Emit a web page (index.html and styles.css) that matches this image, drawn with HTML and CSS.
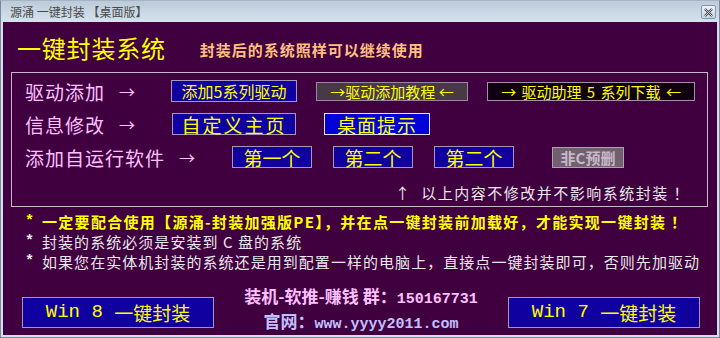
FILE: index.html
```html
<!DOCTYPE html>
<html lang="zh-CN">

<head>
    <meta charset="UTF-8">
    <meta name="viewport" content="width=device-width, initial-scale=1.0">
    <title>源涌 一键封装 【桌面版】</title>
    <link rel="stylesheet" href="styles.css">
</head>

<body>
    <div class="window">
        <div class="titlebar">
            <span class="title">源涌 一键封装 【桌面版】</span>
            <button class="close" title="关闭">
                <svg width="9" height="9" viewBox="0 0 9 9">
                    <path d="M1 1 L8 8 M8 1 L1 8" stroke="#303848" stroke-width="2.2" fill="none" />
                    <path d="M1 1 L8 8 M8 1 L1 8" stroke="#ffffff" stroke-width="0.8" fill="none" />
                </svg>
            </button>
        </div>

        <main class="client">
            <header class="head">
                <h1 class="head-title">一键封装系统</h1>
                <span class="head-sub">封装后的系统照样可以继续使用</span>
            </header>

            <section class="panel">
                <div class="row">
                    <span class="label">驱动添加</span>
                    <span class="arrow">→</span>
                    <button class="btn btn-blue btn-r1">添加5系列驱动</button>
                    <button class="btn btn-gray btn-guide">→驱动添加教程 ←</button>
                    <button class="btn btn-dark btn-down">→ 驱动助理 5 系列下载 ←</button>
                </div>
                <div class="row">
                    <span class="label">信息修改</span>
                    <span class="arrow">→</span>
                    <button class="btn btn-blue btn-big btn-home">自定义主页</button>
                    <button class="btn btn-bright btn-big btn-tip">桌面提示</button>
                </div>
                <div class="row">
                    <span class="label">添加自运行软件</span>
                    <span class="arrow">→</span>
                    <button class="btn btn-blue btn-big btn-soft btn-first">第一个</button>
                    <button class="btn btn-blue btn-big btn-soft">第二个</button>
                    <button class="btn btn-blue btn-big btn-soft">第二个</button>
                    <button class="btn btn-mute">非C预删</button>
                </div>
                <div class="row row-note">
                    <span>↑&nbsp; 以上内容不修改并不影响系统封装 ！</span>
                </div>
            </section>

            <ul class="notes">
                <li class="note-warn"><span class="star">*</span>一定要配合使用【源涌-封装加强版PE】，并在点一键封装前加载好，才能实现一键封装 ！</li>
                <li><span class="star">*</span>封装的系统必须是安装到 C 盘的系统</li>
                <li><span class="star">*</span>如果您在实体机封装的系统还是用到配置一样的电脑上，直接点一键封装即可，否则先加驱动</li>
            </ul>

            <footer class="foot">
                <button class="btn btn-blue btn-win"><span class="mono">Win 8 </span>一键封装</button>
                <div class="contact">
                    <div class="qq">装机-软推-赚钱 群：<span class="mono">150167731</span></div>
                    <div class="site">官网：<span class="mono">www.yyyy2011.com</span></div>
                </div>
                <button class="btn btn-blue btn-win"><span class="mono">Win 7 </span>一键封装</button>
            </footer>
        </main>
    </div>
</body>

</html>
```

FILE: styles.css
```css
body {
    margin: 0;
    font-family: "Noto Sans CJK SC", "Noto Sans", sans-serif;
}

.window {
    width: 720px;
    height: 338px;
    box-sizing: border-box;
    background-color: #d4e0ec;
    border: 1px solid #7c8898;
    border-top-color: #a8b4c4;
    display: flex;
    flex-direction: column;
}

.titlebar {
    height: 22px;
    display: flex;
    align-items: center;
    justify-content: space-between;
    padding: 0 3px 0 9px;
    background: linear-gradient(#bccbd9, #d6e2ee);
}

.title {
    font-size: 12px;
    color: #4a4a4a;
}

.close {
    width: 15px;
    height: 14px;
    padding: 0;
    margin-top: 1px;
    border: 1px solid #8494ac;
    border-radius: 2px;
    background: linear-gradient(#eef2f8, #c8d2e0);
    display: flex;
    align-items: center;
    justify-content: center;
}

.client {
    flex: 1;
    margin: 0 2px 2px 2px;
    background-color: #400040;
    display: flex;
    flex-direction: column;
    padding-left: 8px;
}

.head {
    height: 50px;
    display: flex;
    align-items: center;
    padding-left: 6px;
}

.head-title {
    margin: 0;
    font-size: 24px;
    font-weight: normal;
    color: #ffff00;
    letter-spacing: 0.8px;
}

.head-sub {
    margin-left: 34px;
    margin-top: 4px;
    font-size: 15px;
    font-weight: bold;
    color: #ffc080;
    letter-spacing: 1px;
}

.panel {
    width: 697px;
    height: 135px;
    box-sizing: border-box;
    border: 1px solid #c8b8c8;
    padding: 7px 17px 0 13px;
    display: flex;
    flex-direction: column;
    gap: 11px;
}

.row {
    height: 22px;
    display: flex;
    align-items: center;
}

.row > * {
    flex-shrink: 0;
    white-space: nowrap;
}

.label {
    font-size: 19px;
    color: #ffc0ff;
    letter-spacing: 1px;
}

.arrow {
    margin-left: 14px;
    font-size: 16px;
    color: #ffc0ff;
}

.btn {
    box-sizing: border-box;
    border: 1px solid #a898b8;
    color: #ffff00;
    font-family: "Noto Sans CJK SC", sans-serif;
    font-size: 15px;
    line-height: 1;
    padding: 0;
    display: flex;
    align-items: center;
    justify-content: center;
    flex-shrink: 0;
    white-space: nowrap;
}

.btn-blue {
    background-color: #1000a0;
}

.btn-bright {
    background-color: #0000d8;
    border-color: #e0e0f0;
}

.btn-gray {
    background-color: #483848;
    border-color: #9888a0;
}

.btn-dark {
    background-color: #100010;
    border-color: #a090a8;
}

.btn-big {
    font-size: 19px;
    height: 22px;
}

.btn-r1 {
    width: 126px;
    height: 22px;
    margin-left: 36px;
    font-size: 16px;
}

.btn-guide {
    width: 152px;
    height: 19px;
    margin-left: 19px;
}

.btn-down {
    width: 208px;
    height: 19px;
    margin-left: 19px;
    word-spacing: 2px;
}

.btn-home {
    width: 124px;
    margin-left: 37px;
    letter-spacing: 2px;
}

.btn-tip {
    width: 106px;
    margin-left: 28px;
    letter-spacing: 1px;
}

.btn-soft {
    width: 80px;
    margin-left: 21px;
}

.btn-first {
    margin-left: 37px;
}

.btn-mute {
    width: 72px;
    height: 21px;
    margin-left: 38px;
    background-color: #706070;
    border-color: #b0a0b0;
    color: #c8b8c8;
    font-weight: bold;
}

.row-note {
    margin-top: 2px;
    justify-content: flex-end;
    font-size: 15px;
    color: #e8e8e8;
    letter-spacing: 1.5px;
}

.notes {
    list-style: none;
    margin: 5px 0 0 0;
    padding: 0 0 0 14px;
    font-size: 15px;
    color: #e8e8e8;
    letter-spacing: 1.05px;
}

.notes li {
    height: 20px;
    line-height: 20px;
    display: flex;
    white-space: nowrap;
}

.notes .note-warn {
    color: #ffff00;
    font-weight: bold;
    letter-spacing: 1.3px;
}

.star {
    width: 17px;
    flex-shrink: 0;
    font-family: "Liberation Mono", monospace;
    font-weight: bold;
}

.foot {
    margin-top: 17px;
    padding: 0 17px 0 11px;
    display: flex;
    align-items: center;
    justify-content: space-between;
}

.btn-win {
    width: 192px;
    height: 31px;
    font-size: 19px;
}

.mono {
    font-family: "Liberation Mono", monospace;
}

.btn-win .mono {
    font-size: 19px;
    white-space: pre;
}

.contact {
    display: flex;
    flex-direction: column;
    align-items: center;
    margin-top: -4px;
    font-size: 17px;
    line-height: 21px;
}

.qq {
    color: #ffc0ff;
    font-weight: bold;
}

.site {
    color: #c0c0ff;
    font-weight: bold;
}

.contact .mono {
    font-size: 15px;
}
```
